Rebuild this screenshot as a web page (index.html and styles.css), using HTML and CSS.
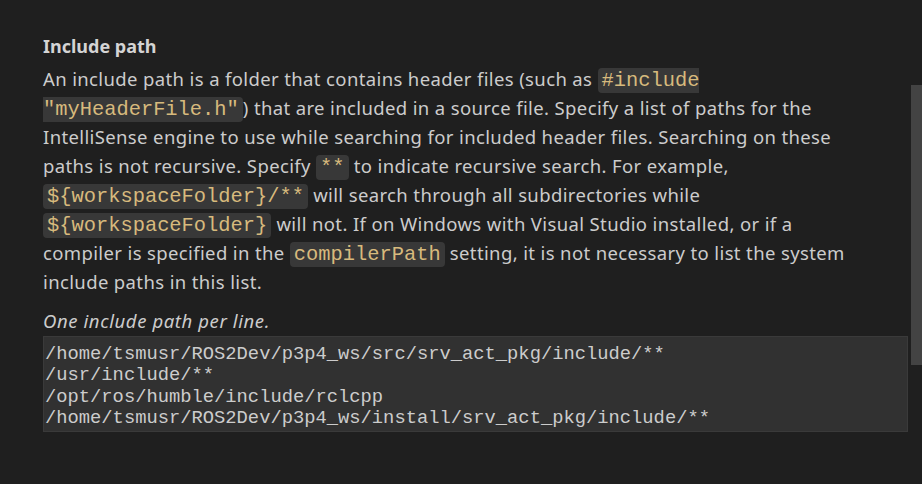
FILE: index.html
```html
<!DOCTYPE html>
<html>
<head>
<meta charset="utf-8">
<link rel="stylesheet" href="styles.css">
</head>
<body>
<div class="page">
  <div class="setting">
    <div class="title">Include path</div>
    <div class="desc">An include path is a folder that contains header files (such as <code>#include<br>"myHeaderFile.h"</code>) that are included in a source file. Specify a list of paths for the<br>IntelliSense engine to use while searching for included header files. Searching on these<br>paths is not recursive. Specify <code>**</code> to indicate recursive search. For example,<br><code>${workspaceFolder}/**</code> will search through all subdirectories while<br><code>${workspaceFolder}</code> will not. If on Windows with Visual Studio installed, or if a<br>compiler is specified in the <code>compilerPath</code> setting, it is not necessary to list the system<br>include paths in this list.</div>
    <div class="hint">One include path per line.</div>
    <div class="editor">
      <div class="line">/home/tsmusr/ROS2Dev/p3p4_ws/src/srv_act_pkg/include/**</div>
      <div class="line">/usr/include/**</div>
      <div class="line">/opt/ros/humble/include/rclcpp</div>
      <div class="line">/home/tsmusr/ROS2Dev/p3p4_ws/install/srv_act_pkg/include/**</div>
    </div>
  </div>
  <div class="scrollbar"></div>
</div>
</body>
</html>
```
FILE: styles.css
```css
html, body {
  margin: 0;
  padding: 0;
  background: #1f1f1f;
  width: 922px;
  height: 484px;
  overflow: hidden;
}
.page {
  position: relative;
  width: 922px;
  height: 484px;
  box-sizing: border-box;
  padding: 32px 13px 0 43px;
  font-family: "Noto Sans", sans-serif;
  font-size: 18.5px;
  color: #cccccc;
}
.title {
  font-weight: 700;
  font-size: 18px;
  line-height: 29px;
  color: #d4d4d4;
  margin-bottom: 3px;
}
.desc {
  line-height: 29px;
  letter-spacing: 0.37px;
  white-space: nowrap;
}
code {
  font-family: "Liberation Mono", monospace;
  font-size: 20.4px;
  line-height: 1;
  letter-spacing: 0;
  color: #d7ba7d;
  background: #383838;
  border-radius: 4px;
  padding: 1px 4px;
}
.hint {
  font-style: italic;
  line-height: 29px;
  letter-spacing: 0.6px;
  margin-top: 10px;
  margin-bottom: 1px;
}
.editor {
  height: 96px;
  box-sizing: border-box;
  border: 1px solid #3a3a3a;
  background: #313131;
  padding: 7px 2px 0 1px;
  margin-right: 1px;
  font-family: "Liberation Mono", monospace;
  font-size: 18.8px;
  line-height: 21.4px;
  color: #cccccc;
}
.line {
  white-space: pre;
}
.scrollbar {
  position: absolute;
  left: 911px;
  top: 85px;
  width: 11px;
  height: 280px;
  background: #434343;
}
```
